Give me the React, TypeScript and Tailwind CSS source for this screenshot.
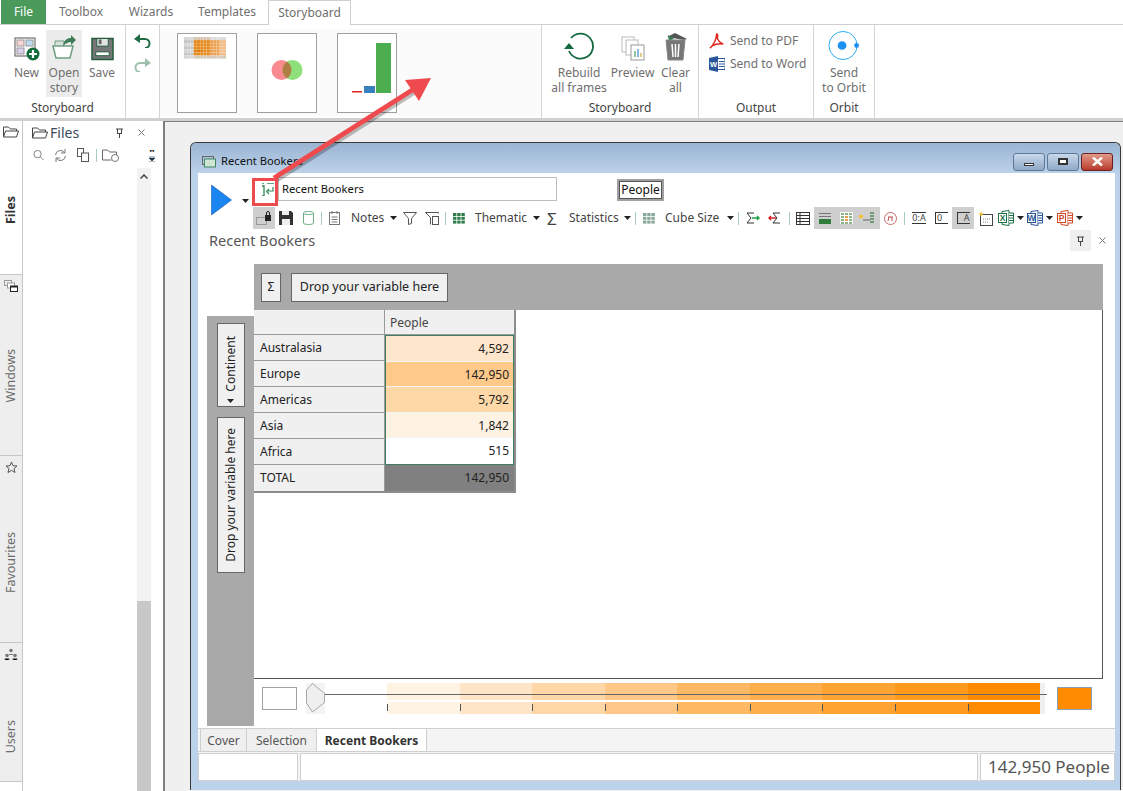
import React from "react";

const Caret = ({ className = "" }: { className?: string }) => (
  <svg width="7" height="4" viewBox="0 0 7 4" className={`shrink-0 ${className}`}>
    <path d="M0 0h7L3.500 4z" fill="#222" />
  </svg>
);

const Sep = ({ className = "" }: { className?: string }) => (
  <span className={`h-[13px] w-px shrink-0 bg-[#a9cdb8] ${className}`} />
);

const RibbonButton = ({
  icon,
  label,
  className = "",
}: {
  icon: React.ReactNode;
  label: React.ReactNode;
  className?: string;
}) => (
  <div className={`flex flex-col items-center whitespace-nowrap text-center leading-[15px] text-[#6f6f6f] ${className}`}>
    <div className="flex h-[33px] items-end justify-center pb-[2px]">{icon}</div>
    <div className="mt-[2px]">{label}</div>
  </div>
);

const RibbonGroup = ({
  title,
  className = "",
  children,
}: {
  title?: string;
  className?: string;
  children: React.ReactNode;
}) => (
  <div className={`flex h-full shrink-0 flex-col border-r border-[#d4d4d4] ${className}`}>
    <div className="flex-1">{children}</div>
    {title && <div className="mb-[2px] text-center leading-[16px] text-[#444]">{title}</div>}
  </div>
);

const GridIcon = ({ c = "#2f7d4a" }: { c?: string }) => (
  <svg width="12" height="11" viewBox="0 0 12 11" className="shrink-0">
    {[0, 1, 2].map((r) =>
      [0, 1, 2].map((k) => <rect key={`${r}${k}`} x={k * 4.2} y={r * 3.8} width="3.4" height="3" fill={c} />)
    )}
  </svg>
);

const OfficeIcon = ({ c, l }: { c: string; l: string }) => (
  <svg width="16" height="16" viewBox="0 0 16 16" className="shrink-0">
    <path d="M4 1.500 11 .5v15l-7-1z" fill="#fff" stroke={c} />
    <path d="M11 3h4.500v10H11" fill="#fff" stroke={c} />
    <path d="M11 5.500h4M11 8h4M11 10.500h4" stroke={c} />
    <rect x="0.500" y="3.500" width="8" height="9" fill="#fff" stroke={c} />
    <text x="4.500" y="11" fontSize="8.500" fontWeight="700" textAnchor="middle" fill={c} fontFamily="Liberation Sans">
      {l}
    </text>
  </svg>
);

const thumbCols = Array.from({ length: 13 }, (_, i) => i);
const thumbRows = Array.from({ length: 7 }, (_, i) => i);

const heatColor = (r: number, k: number) => {
  if (k < 3) return r % 2 ? "#c4c4c4" : "#d6d6d6";
  if (r === 0) return k < 8 ? "#d8c4ae" : "#dcdcdc";
  if (r === 6) return "#d4c8ba";
  if (r === 4 && k < 6) return "#e27f0c";
  if (k < 8) return "#e58a1e";
  if (k < 11) return "#eba254";
  return "#f0bd88";
};

const Thumbnails = () => (
  <div className="flex h-[87px] w-[381px] gap-[20px] bg-[#fbfbfb] pl-[17px] pt-[4px]">
    <div className="h-[80px] w-[60px] border border-[#a0a0a0] bg-white pl-[6px] pt-[3px]">
      <svg width="42" height="22" viewBox="0 0 42 22">
        {thumbRows.map((r) =>
          thumbCols.map((k) => (
            <rect key={`${r}-${k}`} x={k * 3.25} y={r * 3.1} width="3.100" height="3" fill={heatColor(r, k)} />
          ))
        )}
      </svg>
    </div>
    <div className="h-[80px] w-[60px] border border-[#a0a0a0] bg-white pl-[13px] pt-[25px]">
      <svg width="33" height="22" viewBox="0 0 33 22">
        <circle cx="10.500" cy="11" r="10" fill="#f98a90" />
        <circle cx="21.500" cy="11" r="10" fill="#8de07a" />
        <path d="M16 2.700a10 10 0 0 1 0 16.600a10 10 0 0 1 0-16.600z" fill="#b07d42" />
      </svg>
    </div>
    <div className="flex h-[80px] w-[60px] items-end border border-[#a0a0a0] bg-white pb-[19px] pl-[14px]">
      <svg width="40" height="50" viewBox="0 0 40 50">
        <rect x="0" y="48" width="10" height="1.500" fill="#e62222" />
        <rect x="12" y="43" width="11" height="7" fill="#3a7fbd" />
        <rect x="24" y="0" width="15" height="50" fill="#4cae4f" />
      </svg>
    </div>
  </div>
);

const Ribbon = () => (
  <div className="flex h-[96px] shrink-0 border-b-[3px] border-[#d0d0d0] text-[12px]">
    <RibbonGroup title="Storyboard" className="w-[126px]">
      <div className="flex pl-[12px] pt-[5px]">
        <RibbonButton
          className="w-[29px]"
          label="New"
          icon={
            <svg width="26" height="24" viewBox="0 0 26 24">
              <rect x="1" y="1" width="20" height="18" fill="#fff" stroke="#555" />
              <rect x="3" y="3" width="7" height="6" fill="#f9d5d5" stroke="#999" />
              <rect x="12" y="3" width="7" height="6" fill="#bcd8ef" stroke="#999" />
              <rect x="3" y="11" width="7" height="6" fill="#dcd0ef" stroke="#999" />
              <circle cx="19" cy="17" r="6.500" fill="#116b3a" />
              <path d="M19 13v8M15 17h8" stroke="#fff" strokeWidth="2.200" />
            </svg>
          }
        />
        <div className="ml-[5px] h-[67px] w-[36px] bg-[#ececec]">
          <RibbonButton
            label={
              <>
                Open
                <br />
                story
              </>
            }
            icon={
              <svg width="26" height="27" viewBox="0 0 26 27">
                <path d="M2 12h20l-3 12H5z" fill="#fff" stroke="#6f9d80" strokeWidth="1.500" />
                <path d="M4 11V7h9v4" fill="#d6e2da" stroke="#6f9d80" />
                <path d="M12 12c1-6 4-8 8-8V1l5 5-5 5V8c-3 0-5 1-8 4z" fill="#3f7d58" />
              </svg>
            }
          />
        </div>
        <RibbonButton
          className="ml-[2px] w-[36px]"
          label="Save"
          icon={
            <svg width="23" height="24" viewBox="0 0 24 24">
              <path d="M1 1h22v22H1z" fill="#777" stroke="#1f5c3a" strokeWidth="1.500" />
              <rect x="6" y="1" width="12" height="8" fill="#e3e3e3" stroke="#1f5c3a" />
              <rect x="8" y="2" width="3" height="5" fill="#666" />
              <rect x="5" y="15" width="14" height="4" fill="#fff" stroke="#1f5c3a" />
            </svg>
          }
        />
      </div>
    </RibbonGroup>
    <RibbonGroup className="w-[34px]">
      <div className="flex flex-col items-center gap-[10px] pt-[9px]">
        <svg width="17" height="14" viewBox="0 0 17 14">
          <path d="M3 5h8a4.500 4.500 0 0 1 0 9" fill="none" stroke="#1f6b44" strokeWidth="2" />
          <path d="M6 0v9L0 5z" fill="#1f6b44" />
        </svg>
        <svg width="17" height="14" viewBox="0 0 17 14">
          <path d="M14 5H6a4.500 4.500 0 0 0 0 9" fill="none" stroke="#9dbfab" strokeWidth="2" />
          <path d="M11 0v9l6-4z" fill="#9dbfab" />
        </svg>
      </div>
    </RibbonGroup>
    <div className="flex h-full shrink-0 border-r border-[#d4d4d4] pt-[4px]">
      <Thumbnails />
    </div>
    <RibbonGroup title="Storyboard" className="w-[157px]">
      <div className="flex pl-[10px] pt-[5px]">
        <RibbonButton
          className="w-[54px]"
          label={
            <>
              Rebuild
              <br />
              all frames
            </>
          }
          icon={
            <svg width="30" height="30" viewBox="0 0 30 30">
              <path d="M5 20A12.500 12.500 0 1 0 7 7" fill="none" stroke="#14693f" strokeWidth="1.800" />
              <path d="M0 16h10l-5-6z" fill="#14693f" transform="translate(0 2)" />
            </svg>
          }
        />
        <RibbonButton
          className="ml-[5px] w-[43px]"
          label="Preview"
          icon={
            <svg width="24" height="25" viewBox="0 0 24 25">
              <rect x="1" y="1" width="12" height="15" fill="#fff" stroke="#bbb" />
              <rect x="5" y="4" width="12" height="15" fill="#fff" stroke="#bbb" />
              <rect x="10" y="9" width="13" height="15" fill="#fff" stroke="#999" />
              <rect x="13" y="15" width="2" height="6" fill="#8fc8a0" />
              <rect x="16" y="13" width="2" height="8" fill="#8fb8dd" />
              <rect x="19" y="17" width="2" height="4" fill="#e5c98a" />
            </svg>
          }
        />
        <RibbonButton
          className="ml-[7px] w-[29px]"
          label={
            <>
              Clear
              <br />
              all
            </>
          }
          icon={
            <svg width="25" height="29" viewBox="0 0 25 29">
              <path d="M4 5 12 1l12 6-3 1z" fill="#555" />
              <path d="M5 3l6 4-5 2z" fill="#2f7d4a" />
              <path d="M3 8h19l-2 20H5z" fill="#777" stroke="#888" />
              <path d="M9 12l1 13M12.500 12v13M16 12l-1 13" stroke="#fff" strokeWidth="1.500" />
            </svg>
          }
        />
      </div>
    </RibbonGroup>
    <RibbonGroup title="Output" className="w-[115px]">
      <div className="flex flex-col gap-[7px] pl-[10px] pt-[8px] text-[#707070]">
        <div className="flex h-[16px] items-center gap-[5px] whitespace-nowrap">
          <svg width="16" height="16" viewBox="0 0 16 16" className="shrink-0">
            <path
              d="M1 15c2-1 5-6 6-10 .5-2 0-4 1-4s.8 2 .3 4c1 3 3 5 6 6-3-.5-8 0-11 2z"
              fill="none"
              stroke="#e2231a"
              strokeWidth="1.400"
            />
          </svg>
          <span>Send to PDF</span>
        </div>
        <div className="flex h-[16px] items-center gap-[5px] whitespace-nowrap">
          <svg width="16" height="16" viewBox="0 0 16 16" className="shrink-0">
            <path d="M0 2 9 0v16l-9-2z" fill="#2b579a" />
            <path d="M9 2.500h7v11H9" fill="#fff" stroke="#2b579a" />
            <path d="M10 5.500h5M10 8h5M10 10.500h5" stroke="#2b579a" />
            <text x="4.500" y="11" fontSize="7.500" fontWeight="700" textAnchor="middle" fill="#fff" fontFamily="Liberation Sans">
              W
            </text>
          </svg>
          <span>Send to Word</span>
        </div>
      </div>
    </RibbonGroup>
    <RibbonGroup title="Orbit" className="w-[61px]">
      <RibbonButton
        className="pt-[5px]"
        label={
          <>
            Send
            <br />
            to Orbit
          </>
        }
        icon={
          <svg width="34" height="31" viewBox="0 0 34 32">
            <circle cx="16" cy="16" r="14.500" fill="none" stroke="#29a9ee" strokeWidth="1" />
            <circle cx="15" cy="16" r="4.500" fill="#1e90f0" />
            <circle cx="30" cy="16" r="2.500" fill="#1e90f0" />
          </svg>
        }
      />
    </RibbonGroup>
  </div>
);

const SideTab = ({
  label,
  icon,
  h,
  pt,
  active,
}: {
  label: string;
  icon: React.ReactNode;
  h: string;
  pt: string;
  active?: boolean;
}) => (
  <div className={`flex flex-col items-center border-b border-[#c6c6c6] pt-[5px] ${h} ${active ? "bg-white" : "bg-[#eeeeee]"}`}>
    {icon}
    <div
      className={`rotate-180 text-[12.500px] leading-[14px] [writing-mode:vertical-rl] ${pt} ${
        active ? "font-bold text-[#333]" : "text-[#6b6b6b]"
      }`}
    >
      {label}
    </div>
  </div>
);

const SideStrip = () => (
  <div className="flex w-[23px] shrink-0 flex-col border-r border-[#c6c6c6]">
    <SideTab
      active
      h="h-[154px]"
      pt="mt-[58px]"
      label="Files"
      icon={
        <svg width="16" height="12" viewBox="0 0 16 12">
          <path d="M.5 11V1h5l2 2h6v2M.5 11l2-6h13l-2 6z" fill="#fff" stroke="#444" />
        </svg>
      }
    />
    <SideTab
      h="h-[181px]"
      pt="mt-[57px]"
      label="Windows"
      icon={
        <svg width="14" height="12" viewBox="0 0 14 12">
          <rect x=".5" y=".5" width="7" height="5" fill="none" stroke="#999" />
          <rect x="3.500" y="3" width="7" height="5" fill="#fff" stroke="#999" />
          <rect x="6.500" y="6" width="7" height="5.500" fill="#fff" stroke="#222" />
          <rect x="6.500" y="6" width="7" height="1.500" fill="#222" />
        </svg>
      }
    />
    <SideTab
      h="h-[187px]"
      pt="mt-[59px]"
      label="Favourites"
      icon={
        <svg width="13" height="12" viewBox="0 0 13 12">
          <path d="M6.500 1 8 4.700l4 .3-3 2.600 1 3.900-3.500-2.100L3 11.500l1-3.900L1 5l4-.3z" fill="none" stroke="#555" />
        </svg>
      }
    />
    <SideTab
      h="flex-1"
      pt="mt-[60px]"
      label="Users"
      icon={
        <svg width="14" height="12" viewBox="0 0 14 12">
          <circle cx="7" cy="2.500" r="1.800" fill="#777" />
          <circle cx="3" cy="7.500" r="1.800" fill="#777" />
          <circle cx="11" cy="7.500" r="1.800" fill="#777" />
          <path d="M5 6.500h4M1 12v-1.500h4V12M9 12v-1.500h4V12" stroke="#777" />
        </svg>
      }
    />
    <div className="h-[9px] bg-white" />
  </div>
);

const FilesPanel = () => (
  <div className="relative flex w-[140px] shrink-0 flex-col bg-white">
    <div className="flex h-[21px] items-center pl-[9px] pt-[2px]">
      <svg width="16" height="12" viewBox="0 0 16 12" className="shrink-0">
        <path d="M.5 11V1h5l2 2h6v2M.5 11l2-6h13l-2 6z" fill="#fff" stroke="#444" />
      </svg>
      <span className="ml-[2px] text-[14px] leading-[17px] text-[#3d4a5c]">Files</span>
      <svg width="9" height="10" viewBox="0 0 9 10" className="ml-[36px] shrink-0">
        <path d="M1 1h7M2 5.500h5M2.500 1v4.500M6.500 1v4.500M4.500 5.500V10" stroke="#444" fill="none" />
      </svg>
      <svg width="7" height="7" viewBox="0 0 7 7" className="ml-[14px] shrink-0">
        <path d="M.5.5l6 6M6.500.5l-6 6" stroke="#777" />
      </svg>
    </div>
    <div className="flex h-[26px] items-center pl-[10px]">
      <svg width="11" height="12" viewBox="0 0 12 12" className="shrink-0">
        <circle cx="5" cy="5" r="4" fill="none" stroke="#777" />
        <path d="M8 8l3.500 3.500" stroke="#777" />
      </svg>
      <svg width="13" height="13" viewBox="0 0 13 13" className="ml-[10px] shrink-0">
        <path d="M1.500 6a5 5 0 0 1 9-2.500M11.500 7a5 5 0 0 1-9 2.500" fill="none" stroke="#777" />
        <path d="M11 0v4H7M2 13V9h4" fill="none" stroke="#777" />
      </svg>
      <svg width="12" height="14" viewBox="0 0 12 14" className="ml-[10px] shrink-0">
        <rect x=".5" y=".5" width="6" height="8" fill="#fff" stroke="#555" />
        <rect x="4.500" y="5" width="7" height="8.500" fill="#fff" stroke="#555" />
      </svg>
      <Sep className="ml-[7px]" />
      <svg width="17" height="13" viewBox="0 0 17 13" className="ml-[5px] shrink-0">
        <path d="M.5 11V1h5l2 2h7v4M.5 11h9" fill="none" stroke="#666" />
        <circle cx="13" cy="9" r="3.500" fill="#fff" stroke="#777" />
      </svg>
      <div className="ml-[30px] flex flex-col items-center gap-[3px]">
        <span className="text-[7px] leading-[4px] text-[#222]">▪▪</span>
        <svg width="6" height="6" viewBox="0 0 6 6">
          <path d="M0 0h6M0 2h6L3 5zM0 6h6" stroke="#234" fill="#234" strokeWidth=".6" />
        </svg>
      </div>
    </div>
    <div className="absolute bottom-0 left-[114px] top-[47px] flex w-[14px] flex-col items-center bg-[#f2f2f2]">
      <svg width="8" height="5" viewBox="0 0 8 5" className="mt-[6px]">
        <path d="M.5 4.500 4 1l3.500 3.500" fill="none" stroke="#444" strokeWidth="1.500" />
      </svg>
      <div className="mt-auto h-[190px] w-full bg-[#c8c8c8]" />
    </div>
  </div>
);

const MainToolbar = () => (
  <div className="flex h-[24px] shrink-0 items-center text-[12px] text-[#444]">
    <div className="ml-[55px] flex h-[22px] w-[22px] shrink-0 items-center justify-center bg-[#cfcfcf]">
      <svg width="16" height="14" viewBox="0 0 16 14">
        <rect x=".5" y="6.500" width="10" height="7" fill="none" stroke="#999" />
        <rect x="9" y="4" width="6" height="6" fill="#222" />
        <path d="M10.500 4V2a1.500 1.500 0 0 1 3 0v2" fill="none" stroke="#222" />
      </svg>
    </div>
    <svg width="14" height="14" viewBox="0 0 14 14" className="ml-[4px] shrink-0">
      <path d="M0 0h12l2 2v12H0z" fill="#333" />
      <rect x="3" y="0" width="7" height="4" fill="#eee" />
      <rect x="3" y="8" width="8" height="6" fill="#eee" />
    </svg>
    <svg width="11" height="14" viewBox="0 0 11 14" className="ml-[10px] shrink-0">
      <ellipse cx="5.500" cy="2" rx="5" ry="1.600" fill="none" stroke="#6fae86" />
      <path d="M.5 2v10c0 2 10 2 10 0V2" fill="none" stroke="#6fae86" />
    </svg>
    <Sep className="ml-[7px]" />
    <svg width="11" height="14" viewBox="0 0 11 14" className="ml-[7px] shrink-0">
      <rect x=".5" y="1.500" width="10" height="12" fill="#fff" stroke="#777" />
      <path d="M3 0v3M8 0v3M2.500 6h6M2.500 8.500h6M2.500 11h6" stroke="#777" />
    </svg>
    <span className="ml-[11px] w-[34px] whitespace-nowrap">Notes</span>
    <Caret className="ml-[5px]" />
    <svg width="14" height="13" viewBox="0 0 14 13" className="ml-[6px] shrink-0">
      <path d="M.5.500h13L8.500 6.500v5l-3 1v-6z" fill="none" stroke="#555" />
    </svg>
    <svg width="14" height="13" viewBox="0 0 14 13" className="ml-[8px] shrink-0">
      <path d="M.5.500h13v1M.5.500l5 5v7" fill="none" stroke="#555" />
      <rect x="7.500" y="4.500" width="6" height="8" fill="#fff" stroke="#555" />
    </svg>
    <Sep className="ml-[6px]" />
    <span className="ml-[7px]">
      <GridIcon />
    </span>
    <span className="ml-[10px] w-[52px] whitespace-nowrap">Thematic</span>
    <Caret className="ml-[6px]" />
    <span className="ml-[7px] w-[11px] text-[17px] leading-none">Σ</span>
    <span className="ml-[11px] w-[50px] whitespace-nowrap">Statistics</span>
    <Caret className="ml-[5px]" />
    <Sep className="ml-[4px]" />
    <span className="ml-[7px]">
      <GridIcon c="#8aa89a" />
    </span>
    <span className="ml-[10px] w-[57px] whitespace-nowrap">Cube Size</span>
    <Caret className="ml-[5px]" />
    <Sep className="ml-[4px]" />
    <svg width="14" height="12" viewBox="0 0 14 12" className="ml-[7px] shrink-0">
      <path d="M8 1H1l4 5-4 5h7" fill="none" stroke="#333" />
      <path d="M6 6h7M11 4l2 2-2 2" fill="none" stroke="#22a04a" strokeWidth="1.500" />
    </svg>
    <svg width="13" height="12" viewBox="0 0 13 12" className="ml-[8px] shrink-0">
      <path d="M12 1H5l4 5-4 5h7" fill="none" stroke="#333" />
      <path d="M8 6H1M3 4 1 6l2 2" fill="none" stroke="#d8232a" strokeWidth="1.500" />
    </svg>
    <Sep className="ml-[8px]" />
    <svg width="14" height="13" viewBox="0 0 14 13" className="ml-[6px] shrink-0">
      <rect x=".5" y=".5" width="13" height="12" fill="none" stroke="#333" />
      <path d="M4 .5v12M.5 3.500h13M.5 6.500h13M.5 9.500h13" stroke="#333" />
    </svg>
    <div className="ml-[4px] flex h-[22px] w-[66px] shrink-0 items-center bg-[#cfcfcf] pl-[5px]">
      <svg width="12" height="12" viewBox="0 0 12 12" className="shrink-0">
        <path d="M0 1.500h12M0 4.500h12" stroke="#777" />
        <rect y="7" width="12" height="5" fill="#2f7d3a" />
      </svg>
      <svg width="13" height="12" viewBox="0 0 13 12" className="ml-[9px] shrink-0">
        <rect width="13" height="12" fill="#fff" />
        <path d="M1 2h3M5 2h3M9 2h3M1 5h3M9 5h3M1 8h3M9 8h3M1 11h3M5 11h3M9 11h3" stroke="#6a9a5f" strokeWidth="1.600" />
        <path d="M5 5h3M5 8h3" stroke="#e8811c" strokeWidth="1.600" />
      </svg>
      <svg width="16" height="12" viewBox="0 0 16 12" className="ml-[6px] shrink-0">
        <rect x="0" y="3" width="4" height="3" fill="#f3c230" />
        <path d="M4 8h7" stroke="#666" />
        <path d="M11 1h4M11 4h4M11 7h4M11 10h4" stroke="#4e8a5c" strokeWidth="1.500" />
      </svg>
    </div>
    <svg width="13" height="13" viewBox="0 0 13 13" className="ml-[4px] shrink-0">
      <circle cx="6.500" cy="6.500" r="6" fill="#fff" stroke="#c56a6a" />
      <path d="M4 5h5M5 5l-1 4M8 5v4" stroke="#b94a4a" />
    </svg>
    <Sep className="ml-[7px]" />
    <span className="ml-[7px] w-[14px] border-y border-[#333] text-center text-[9px] leading-[10px]">0:A</span>
    <span className="ml-[9px] w-[13px] border-t border-b border-l border-[#333] pl-px text-[9px] leading-[10px]">0</span>
    <div className="ml-[4px] flex h-[22px] w-[22px] shrink-0 items-center justify-center bg-[#cfcfcf]">
      <span className="w-[13px] border-t border-b border-l border-[#333] text-right text-[9px] leading-[10px]">A</span>
    </div>
    <svg width="15" height="15" viewBox="0 0 15 15" className="ml-[4px] shrink-0">
      <rect x="2.500" y="3.500" width="12" height="11" fill="#fff" stroke="#444" />
      <path d="M5 8h7M5 11h5" stroke="#888" strokeDasharray="1 1" />
      <path d="M3 0l.8 2.200L6 3l-2.200.8L3 6l-.8-2.200L0 3l2.200-.8z" fill="#f3c230" />
    </svg>
    <span className="ml-[5px]">
      <OfficeIcon c="#1e7145" l="X" />
    </span>
    <Caret className="ml-[3px]" />
    <span className="ml-[3px]">
      <OfficeIcon c="#2b579a" l="W" />
    </span>
    <Caret className="ml-[3px]" />
    <span className="ml-[4px]">
      <OfficeIcon c="#d24726" l="P" />
    </span>
    <Caret className="ml-[3px]" />
  </div>
);

const rows: { label: string; value: string; bg: string }[] = [
  { label: "Australasia", value: "4,592", bg: "bg-[#fde6cb]" },
  { label: "Europe", value: "142,950", bg: "bg-[#ffc98a]" },
  { label: "Americas", value: "5,792", bg: "bg-[#ffd8a8]" },
  { label: "Asia", value: "1,842", bg: "bg-[#fef2e3]" },
  { label: "Africa", value: "515", bg: "bg-white" },
];

const PivotTable = () => (
  <div className="w-[262px] border-r-2 border-b-2 border-[#8c8c8c] text-[12px] leading-[25px] text-[#222]">
    <div className="flex h-[25px]">
      <div className="w-[131px] border-r border-b border-[#9a9a9a] bg-[#f0f0f0]" />
      <div className="flex-1 border-b border-[#9a9a9a] bg-[#f0f0f0] pl-[5px] text-[#444]">People</div>
    </div>
    <div className="flex">
      <div className="w-[131px] border-r border-[#9a9a9a]">
        {rows.map((r) => (
          <div key={r.label} className="h-[26px] border-b border-[#9a9a9a] bg-[#f0f0f0] pl-[6px]">
            {r.label}
          </div>
        ))}
      </div>
      <div className="h-[130px] flex-1 border border-[#3f7f5f]">
        {rows.map((r) => (
          <div key={r.label} className={`h-[25.600px] border-b border-[#f4f4f4] pr-[4px] text-right last:border-b-0 ${r.bg}`}>
            {r.value}
          </div>
        ))}
      </div>
    </div>
    <div className="flex h-[26px]">
      <div className="w-[131px] border-r border-[#9a9a9a] bg-[#f0f0f0] pl-[6px]">TOTAL</div>
      <div className="flex-1 bg-[#808080] pr-[5px] text-right">142,950</div>
    </div>
  </div>
);

const scale = [
  "bg-[#fff3e4]",
  "bg-[#ffe5c8]",
  "bg-[#ffd6a6]",
  "bg-[#ffc888]",
  "bg-[#ffb964]",
  "bg-[#ffae4c]",
  "bg-[#ffa333]",
  "bg-[#ff9a1c]",
  "bg-[#ff8c00]",
];

const LegendSlider = () => (
  <div className="relative mt-[4px] flex h-[31px] items-center pl-[8px]">
    <div className="h-[23px] w-[35px] shrink-0 border border-[#a0a0a0] bg-white" />
    <div className="ml-[9px] h-[31px] w-[19px] shrink-0 bg-[#f3f3f3]">
      <svg width="19" height="31" viewBox="0 0 19 31">
        <path d="M.5 7 6.500.5 18.500 10.500v9L6.500 29 .5 20z" fill="#efefef" stroke="#888" strokeWidth=".7" />
      </svg>
    </div>
    <div className="ml-[62px] flex h-[31px] w-[658px] shrink-0 bg-[#f0f0f0] pr-[5px]">
      {scale.map((c) => (
        <div key={c} className={`relative h-full flex-1 ${c}`}>
          <div className="absolute inset-x-0 top-[17px] h-[2px] bg-white" />
          <div className="absolute left-0 top-[21px] h-[7px] w-px bg-[#555]" />
        </div>
      ))}
    </div>
    <div className="absolute left-[71px] top-[11px] h-px w-[722px] bg-[#666]" />
    <div className="ml-[12px] h-[23px] w-[35px] shrink-0 border border-[#8aa0b8] bg-[#ff8c00]" />
  </div>
);

const Pivot = () => (
  <div className="flex min-h-0 flex-1 pl-[9px] pr-[12px]">
    <div className="flex w-[47px] shrink-0 flex-col pt-[52px]">
      <div className="flex flex-1 flex-col items-center gap-[10px] bg-[#a9a9a9] pt-[7px]">
        <div className="relative flex h-[84px] w-[28px] items-start justify-center border border-[#666] bg-[#f0f0f0] pt-[12px]">
          <span className="rotate-180 text-[12px] leading-[14px] text-[#222] [writing-mode:vertical-rl]">Continent</span>
          <Caret className="absolute bottom-[3px]" />
        </div>
        <div className="flex h-[156px] w-[28px] items-center justify-center border border-[#666] bg-[#f0f0f0]">
          <span className="rotate-180 whitespace-nowrap text-[12px] leading-[14px] text-[#222] [writing-mode:vertical-rl]">
            Drop your variable here
          </span>
        </div>
      </div>
    </div>
    <div className="flex min-w-0 flex-1 flex-col">
      <div className="flex h-[46px] shrink-0 items-center gap-[10px] bg-[#a9a9a9] pl-[7px]">
        <div className="flex h-[29px] w-[20px] items-center justify-center border border-[#666] bg-[#f0f0f0] text-[12px] text-[#222]">
          Σ
        </div>
        <div className="flex h-[29px] w-[157px] items-center justify-center border border-[#666] bg-[#f0f0f0] text-[12.500px] text-[#222]">
          Drop your variable here
        </div>
      </div>
      <div className="h-[369px] shrink-0 border-r border-b border-[#555] bg-white">
        <PivotTable />
      </div>
      <LegendSlider />
    </div>
  </div>
);

const CubeWindow = () => (
  <div className="flex h-[648px] w-[931px] shrink-0 flex-col rounded-t-[6px] border border-b-0 border-[#3a3a3a] bg-[#bcd2ea]">
    <div className="flex h-[30px] shrink-0 items-center rounded-t-[6px] bg-gradient-to-b from-[#9ab4d2] to-[#bcd2ea] pl-[11px] pr-[7px] pt-[7px] text-[11.200px] text-[#111]">
      <svg width="14" height="12" viewBox="0 0 14 12" className="shrink-0">
        <rect x=".5" y=".5" width="11" height="8" fill="none" stroke="#666" />
        <rect x="2.500" y="3" width="11" height="8" fill="#cfe6d6" stroke="#3f8a5f" />
      </svg>
      <span className="ml-[5px]">Recent Bookers</span>
      <div className="ml-auto flex gap-[2px]">
        <div className="flex h-[18px] w-[32px] items-end justify-center rounded-[3px] border border-[#5e7898] bg-gradient-to-b from-[#c9d8ea] to-[#8fa9c6] pb-[4px]">
          <span className="h-[3px] w-[10px] border border-[#333] bg-white" />
        </div>
        <div className="flex h-[18px] w-[32px] items-center justify-center rounded-[3px] border border-[#5e7898] bg-gradient-to-b from-[#c9d8ea] to-[#8fa9c6]">
          <span className="h-[7px] w-[10px] border-2 border-[#333] bg-white" />
        </div>
        <div className="flex h-[18px] w-[32px] items-center justify-center rounded-[3px] border border-[#6b1f1f] bg-gradient-to-b from-[#e09a8a] to-[#b8392a]">
          <svg width="13" height="9" viewBox="0 0 13 9">
            <path d="M2 .5l9 8M11 .5l-9 8" stroke="#fff" strokeWidth="2.500" />
          </svg>
        </div>
      </div>
    </div>
    <div className="ml-[7px] mr-[5px] flex min-h-0 flex-1 flex-col bg-white">
      <div className="flex h-[33px] shrink-0 items-start">
        <svg width="21" height="30" viewBox="0 0 21 30" className="ml-[13px] mt-[12px] shrink-0">
          <path d="M.5 0 20.500 15 .5 30z" fill="#1a85f0" stroke="#135fa8" strokeWidth=".6" />
        </svg>
        <Caret className="ml-[10px] mt-[26px]" />
        <div className="ml-[4px] mt-[4px] flex h-[24px] w-[25px] shrink-0 items-center justify-center pl-[3px]">
          <svg width="13" height="13" viewBox="0 0 13 13">
            <path d="M1 0h2M6 0h7M1 3h2v10H1" fill="none" stroke="#2f8a55" strokeWidth="1.300" />
            <path d="M12 4v4H6M8 6 5.500 8.500 8 11" fill="none" stroke="#2f8a55" strokeWidth="1.200" />
          </svg>
        </div>
        <div className="mt-[4px] flex h-[24px] w-[279px] items-center border border-[#bdbdbd] pl-[3px] text-[11.200px] text-[#111]">
          Recent Bookers
        </div>
        <div className="ml-[60px] mt-[6px] h-[22px] w-[47px] border-2 border-[#a0a0a0] text-[12px] text-[#111]">
          <div className="flex h-full items-center justify-center border border-[#555]">People</div>
        </div>
      </div>
      <MainToolbar />
      <div className="flex h-[34px] shrink-0 items-start">
        <span className="ml-[11px] mt-[1px] text-[14.500px] leading-[19px] text-[#555]">Recent Bookers</span>
        <div className="ml-auto mr-[9px] flex items-center">
          <div className="flex h-[21px] w-[21px] items-center justify-center bg-[#efefef]">
            <svg width="9" height="10" viewBox="0 0 9 10">
              <path d="M1 1h7M2 5.500h5M2.500 1v4.500M6.500 1v4.500M4.500 5.500V10" stroke="#444" fill="none" />
            </svg>
          </div>
          <svg width="7" height="7" viewBox="0 0 7 7" className="ml-[8px]">
            <path d="M.5.5l6 6M6.500.5l-6 6" stroke="#777" />
          </svg>
        </div>
      </div>
      <Pivot />
      <div className="mt-[2px] flex h-[24px] shrink-0 border-y border-[#cfcfcf] bg-[#f4f4f4] pl-[2px] text-[12px] leading-[23px] text-[#555]">
        <div className="w-[47px] flex-none border-x border-[#cfcfcf] bg-[#efefef] text-center">Cover</div>
        <div className="w-[70px] flex-none border-r border-[#cfcfcf] bg-[#efefef] text-center">Selection</div>
        <div className="w-[110px] flex-none border-r border-[#cfcfcf] bg-white text-center font-bold text-[#333]">
          Recent Bookers
        </div>
      </div>
      <div className="flex h-[29px] shrink-0 gap-[2px] bg-[#f4f4f4] pt-[1px]">
        <div className="w-[100px] border border-[#cfcfcf] bg-white" />
        <div className="w-[678px] border border-[#cfcfcf] bg-white" />
        <div className="flex-1 whitespace-nowrap border border-[#cfcfcf] bg-white pl-[7px] text-[17px] leading-[26px] text-[#555]">
          142,950 People
        </div>
      </div>
    </div>
    <div className="h-[9px] shrink-0 bg-[#bcd2ea]" />
  </div>
);

const ArrowOverlay = () => (
  <svg width="1123" height="791" viewBox="0 0 1123 791" className="pointer-events-none absolute left-0 top-0">
    <path d="M274 179 417 88" stroke="#000" strokeOpacity=".25" strokeWidth="5" transform="translate(1 2)" />
    <path d="M274 178 417 87" stroke="#ef4b4f" strokeWidth="5" />
    <path d="M431 78 405 80 419 101z" fill="#ef4b4f" />
    <rect x="253.500" y="179.500" width="23" height="25" fill="none" stroke="#ef4b4f" strokeWidth="3" />
  </svg>
);

export default function App() {
  return (
    <div className="relative flex h-[791px] w-[1123px] flex-col overflow-hidden bg-white font-['Noto_Sans',sans-serif] text-[12px]">
      <div className="flex h-[25px] shrink-0 border-b border-[#cfcfcf] pl-[1px] text-[12px] text-[#6f6f6f]">
        <div className="flex h-[24px] w-[45px] items-center justify-center bg-[#4a9a5c] text-white">File</div>
        <div className="flex w-[70px] items-center justify-center">Toolbox</div>
        <div className="flex w-[70px] items-center justify-center">Wizards</div>
        <div className="flex w-[82px] items-center justify-center">Templates</div>
        <div className="-mb-px flex h-[25px] w-[83px] items-center justify-center border-x border-t border-[#cfcfcf] bg-white">
          Storyboard
        </div>
      </div>
      <Ribbon />
      <div className="flex min-h-0 flex-1">
        <SideStrip />
        <FilesPanel />
        <div className="flex min-w-0 flex-1 border-l-2 border-t border-[#7f7f7f] bg-[#f0f0f0] pl-[25px] pt-[20px]">
          <CubeWindow />
        </div>
      </div>
      <ArrowOverlay />
    </div>
  );
}
